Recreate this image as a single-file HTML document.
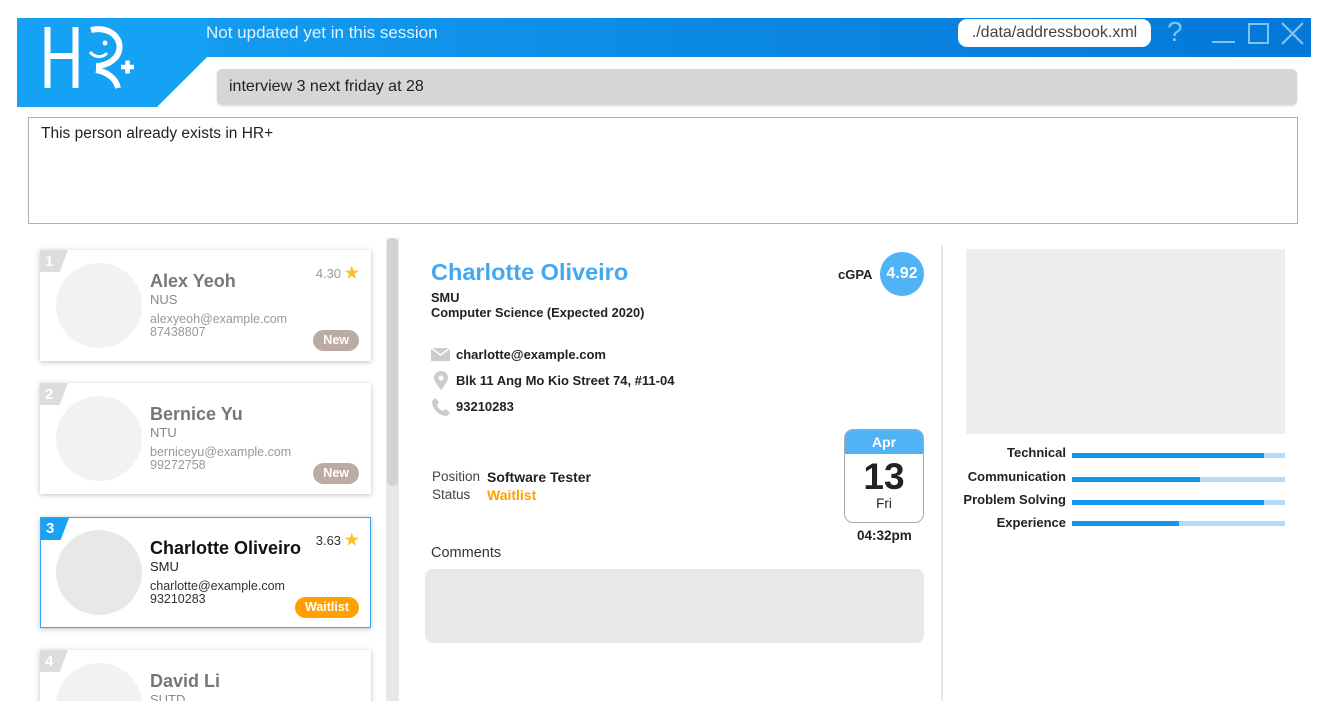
<!DOCTYPE html>
<html><head><meta charset="utf-8">
<style>
*{box-sizing:border-box;margin:0;padding:0}
body{width:1330px;height:722px;background:#fff;font-family:"Liberation Sans",sans-serif;position:relative;overflow:hidden;color:#222}
.abs{position:absolute}
.card{position:absolute;left:40px;width:331px;height:111px;background:#fff;box-shadow:0 1px 5px rgba(0,0,0,.25);overflow:hidden}
.card .tri{position:absolute;left:0;top:0;width:28px;height:22px;background:#ddd;clip-path:polygon(0 0,100% 0,70% 100%,0 100%)}
.card .num{position:absolute;left:5px;top:3px;color:#fff;font-weight:bold;font-size:15px}
.card .av{position:absolute;left:16px;top:13px;width:86px;height:85px;border-radius:50%;background:#f2f2f2}
.card .nm{position:absolute;left:110px;top:21px;font-size:18px;font-weight:bold;color:#777}
.card .sc{position:absolute;left:110px;top:42px;font-size:13px;color:#888}
.card .em{position:absolute;left:110px;top:63px;font-size:12.5px;color:#999;line-height:13px}
.card .rt{position:absolute;right:12px;top:13px;font-size:13px;color:#999}
.card .rt b{color:#fbc02d;font-size:16px}
.card .tag{position:absolute;right:12px;top:80px;height:21px;border-radius:11px;background:#bcaaa4;color:#fff;font-weight:bold;font-size:12.5px;line-height:21px;padding:0 10px}
.lab{font-size:13px;font-weight:bold;color:#222;position:absolute;text-align:right;width:120px;left:946px}
.bar{position:absolute;left:1072px;width:213px;height:5px;background:#b3dcfa}
.bar i{position:absolute;left:0;top:0;height:5px;background:#1296f0}
</style></head><body>
<!-- header -->
<div class="abs" style="left:17px;top:18px;width:1294px;height:39px;background:linear-gradient(90deg,#17a3f5,#0a86e0 60%,#0278d8)"></div>
<div class="abs" style="left:17px;top:18px;width:190px;height:89px;background:#15a2f4;clip-path:polygon(0 0,100% 0,100% 44%,140px 100%,0 100%)"></div>
<svg class="abs" style="left:30px;top:20px" width="120" height="75" viewBox="0 0 120 75">
<g stroke="#fff" stroke-width="6" fill="none">
<path d="M17.5 7V68M45.5 7V68M17.5 36H45.5"/>
<path d="M61 10C84 5 96 24 86 37C81 43 73 46 66 46"/>
<path d="M66 50C78 52 86 59 88 68"/>
<path d="M91 47H104M97.5 40.5V53.5" stroke-width="4.5"/>
</g>
<path d="M60 32C65 38 73 38 77 33" stroke="#fff" stroke-width="3" fill="none"/>
<circle cx="75" cy="23" r="2.5" fill="#fff"/>
</svg>
<div class="abs" style="left:206px;top:23px;font-size:17px;color:#e3f2fd">Not updated yet in this session</div>
<div class="abs" style="left:958px;top:19px;width:193px;height:28px;background:#fff;border-radius:9px;font-size:16px;color:#444;line-height:28px;text-align:center">./data/addressbook.xml</div>
<div class="abs" style="left:1167px;top:16px;font-size:28px;color:#7cc4f4">?</div>
<div class="abs" style="left:1212px;top:41px;width:23px;height:2px;background:#7cc4f4"></div>
<div class="abs" style="left:1248px;top:23px;width:21px;height:21px;border:2px solid #7cc4f4"></div>
<svg class="abs" style="left:1281px;top:22px" width="23" height="23"><path d="M1 1L22 22M22 1L1 22" stroke="#7cc4f4" stroke-width="2.2"/></svg>
<!-- command box -->
<div class="abs" style="left:217px;top:69px;width:1080px;height:36px;background:#d6d6d6;border-radius:5px;box-shadow:0 1px 2px rgba(0,0,0,.15);font-size:16px;line-height:36px;padding-left:12px;color:#222">interview 3 next friday at 28</div>
<div class="abs" style="left:28px;top:117px;width:1270px;height:107px;border:1px solid #b0b0b0;font-size:15.5px;padding:7px 12px;color:#222">This person already exists in HR+</div>
<!-- scrollbar -->
<div class="abs" style="left:386px;top:238px;width:13px;height:464px;background:#e8e8e8"></div>
<div class="abs" style="left:387px;top:238px;width:11px;height:248px;background:#d2d2d2;border-radius:6px"></div>
<!-- cards -->
<div class="card" style="top:250px"><div class="tri"></div><div class="num">1</div><div class="av"></div><div class="nm">Alex Yeoh</div><div class="sc">NUS</div><div class="em">alexyeoh@example.com<br>87438807</div><div class="rt">4.30 <b>★</b></div><div class="tag">New</div></div>
<div class="card" style="top:383px"><div class="tri"></div><div class="num">2</div><div class="av"></div><div class="nm">Bernice Yu</div><div class="sc">NTU</div><div class="em">berniceyu@example.com<br>99272758</div><div class="tag">New</div></div>
<div class="card" style="top:517px;border:1px solid #35a5f0"><div class="tri" style="background:#1aa2f2;left:0;top:0"></div><div class="num" style="left:5px;top:2px">3</div><div class="av" style="background:#e8e8e8;left:15px;top:12px"></div><div class="nm" style="color:#111;left:109px;top:20px">Charlotte Oliveiro</div><div class="sc" style="color:#222;left:109px;top:41px">SMU</div><div class="em" style="color:#333;left:109px;top:62px">charlotte@example.com<br>93210283</div><div class="rt" style="color:#333;top:12px;right:11px">3.63 <b>★</b></div><div class="tag" style="background:#ffa000;top:79px;right:11px">Waitlist</div></div>
<div class="card" style="top:650px;height:60px"><div class="tri"></div><div class="num">4</div><div class="av"></div><div class="nm">David Li</div><div class="sc">SUTD</div></div>
<div class="abs" style="left:0;top:701px;width:1330px;height:21px;background:#fff"></div>
<!-- detail -->
<div class="abs" style="left:941px;top:245px;width:2px;height:456px;background:#e6e6e6"></div>
<div class="abs" style="left:431px;top:259px;font-size:23.5px;font-weight:bold;color:#42a9f0">Charlotte Oliveiro</div>
<div class="abs" style="left:431px;top:290px;font-size:12.8px;font-weight:bold;color:#222;line-height:15px">SMU<br>Computer Science (Expected 2020)</div>
<div class="abs" style="left:838px;top:267px;font-size:13px;font-weight:bold">cGPA</div>
<div class="abs" style="left:880px;top:252px;width:44px;height:44px;border-radius:50%;background:#4fb3f6;color:#fff;font-weight:bold;font-size:16px;line-height:44px;text-align:center">4.92</div>
<svg class="abs" style="left:431px;top:347px" width="20" height="15"><rect x="0" y="1" width="19" height="13" fill="#ccc"/><path d="M0 1L9.5 8L19 1" stroke="#fff" stroke-width="1.5" fill="none"/></svg>
<svg class="abs" style="left:434px;top:371px" width="14" height="20"><path d="M7 0C3 0 0 3 0 7C0 11 7 19 7 19C7 19 14 11 14 7C14 3 11 0 7 0Z" fill="#ccc"/><circle cx="7" cy="7" r="2.5" fill="#fff"/></svg>
<svg class="abs" style="left:431px;top:397px" width="20" height="20"><path d="M4 1L8 5L6 8C7 11 9 13 12 14L15 12L19 16L16 19C8 19 1 12 1 4Z" fill="#ccc"/></svg>
<div class="abs" style="left:456px;top:342px;font-size:13px;font-weight:bold;line-height:26px">charlotte@example.com<br>Blk 11 Ang Mo Kio Street 74, #11-04<br>93210283</div>
<div class="abs" style="left:432px;top:468px;font-size:13.5px;color:#444;line-height:18px">Position<br>Status</div>
<div class="abs" style="left:487px;top:468px;font-size:14px;font-weight:bold;line-height:18px">Software Tester<br><span style="color:#ffa000">Waitlist</span></div>
<div class="abs" style="left:844px;top:429px;width:80px;height:94px;border:1px solid #aaa;border-radius:9px;overflow:hidden;text-align:center">
<div style="background:#4fb3f6;height:24px;color:#fff;font-weight:bold;font-size:14px;line-height:24px">Apr</div>
<div style="font-size:37px;font-weight:bold;line-height:40px;margin-top:3px;color:#222">13</div>
<div style="font-size:13.5px;line-height:14px">Fri</div></div>
<div class="abs" style="left:857px;top:528px;font-size:13.5px;font-weight:bold">04:32pm</div>
<div class="abs" style="left:431px;top:545px;font-size:14.5px;color:#333">Comments</div>
<div class="abs" style="left:425px;top:569px;width:499px;height:74px;background:#e8e8e8;border-radius:8px"></div>
<!-- right -->
<div class="abs" style="left:966px;top:249px;width:319px;height:185px;background:#eee"></div>
<div class="lab" style="top:445px">Technical</div><div class="bar" style="top:453px"><i style="width:192px"></i></div>
<div class="lab" style="top:469px">Communication</div><div class="bar" style="top:477px"><i style="width:128px"></i></div>
<div class="lab" style="top:492px">Problem Solving</div><div class="bar" style="top:500px"><i style="width:192px"></i></div>
<div class="lab" style="top:515px">Experience</div><div class="bar" style="top:521px"><i style="width:107px"></i></div>
</body></html>
